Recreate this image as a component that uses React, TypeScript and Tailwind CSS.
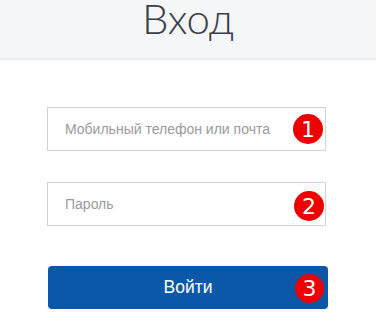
export default function App() {
  return (
    <div className="w-[376px] h-[314px] bg-white overflow-hidden" style={{ fontFamily: '"Liberation Sans", Arial, sans-serif' }}>
      <div className="h-[60px] bg-[#f5f6f7] border-b-2 border-[#ebeced] flex justify-center">
        <h1 className="text-[42px] leading-[36px] font-light text-[#3a3f4a]" style={{ fontFamily: 'Lato, "Open Sans", sans-serif' }}>
          Вход
        </h1>
      </div>

      <div className="flex flex-col pl-[47px] pt-[47px]">
        <div className="relative w-[279px] h-[44px] border border-[#cfd3d6] flex items-center pl-[17px]">
          <span className="text-[14px] text-[#9a9a9a] mt-[1px]">Мобильный телефон или почта</span>
          <span className="absolute left-[245px] top-[6px] w-[30px] h-[30px] rounded-full bg-[#ee0000] text-white text-[22px] flex items-center justify-center" style={{ fontFamily: 'Tahoma, "DejaVu Sans", sans-serif' }}>1</span>
        </div>

        <div className="relative w-[279px] h-[44px] border border-[#cfd3d6] flex items-center pl-[17px] mt-[31px]">
          <span className="text-[14px] text-[#9a9a9a] mt-[1px]">Пароль</span>
          <span className="absolute left-[246px] top-[8px] w-[30px] h-[30px] rounded-full bg-[#ee0000] text-white text-[22px] flex items-center justify-center" style={{ fontFamily: 'Tahoma, "DejaVu Sans", sans-serif' }}>2</span>
        </div>

        <button className="relative w-[280px] h-[43px] mt-[40px] ml-[1px] rounded-[4px] bg-[#0b58a8] text-white text-[17.5px] flex items-center justify-center">
          Войти
          <span className="absolute left-[247px] top-[8px] w-[29px] h-[29px] rounded-full bg-[#ee0000] text-white text-[22px] flex items-center justify-center" style={{ fontFamily: 'Tahoma, "DejaVu Sans", sans-serif' }}>3</span>
        </button>
      </div>
    </div>
  );
}
